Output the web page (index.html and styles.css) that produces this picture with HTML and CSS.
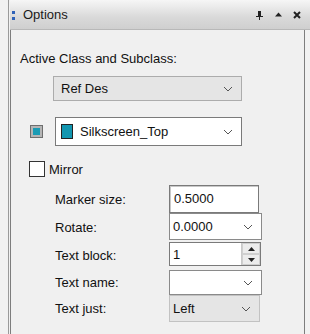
FILE: index.html
```html
<!DOCTYPE html>
<html>
    <head>
        <meta charset="utf-8">
        <link rel="stylesheet" href="styles.css">
    </head>
    <body>
        <div class="frame">
            <div class="panel">
                <div class="titlebar">
                    <span class="grip"><i></i><i></i></span>
                    <span class="title">Options</span>
                    <span class="tools">
                        <svg width="9" height="10" viewBox="0 0 9 10"><path d="M3 1h3v5H3z M1 6h7v1H1z M4 7h1v3H4z" fill="#222"/></svg>
                        <svg width="7" height="5" viewBox="0 0 7 5"><path d="M3.5 0.5L7 4.5H0z" fill="#222"/></svg>
                        <svg width="8" height="8" viewBox="0 0 8 8"><path d="M1 1l6 6M7 1L1 7" stroke="#222" stroke-width="2"/></svg>
                    </span>
                </div>
                <div class="content">
                    <div class="caption">Active Class and Subclass:</div>
                    <div class="combo gray wide">
                        <span>Ref Des</span>
                        <svg class="chev" width="10" height="6" viewBox="0 0 10 6"><path d="M1 1l4 4 4-4" fill="none" stroke="#555"/></svg>
                    </div>
                    <div class="color-row">
                        <span class="swatch-btn"><span></span></span>
                        <div class="combo white wide tall">
                            <span class="swatch"></span>
                            <span>Silkscreen_Top</span>
                            <svg class="chev" width="10" height="6" viewBox="0 0 10 6"><path d="M1 1l4 4 4-4" fill="none" stroke="#555"/></svg>
                        </div>
                    </div>
                    <label class="mirror"><span class="box"></span>Mirror</label>
                    <div class="fields">
                        <span class="lbl">Marker size:</span>
                        <div class="edit">0.5000</div>
                        <span class="lbl">Rotate:</span>
                        <div class="combo white small">
                            <span>0.0000</span>
                            <svg class="chev" width="10" height="6" viewBox="0 0 10 6"><path d="M1 1l4 4 4-4" fill="none" stroke="#555"/></svg>
                        </div>
                        <span class="lbl">Text block:</span>
                        <div class="spin">
                            <div class="spin-text">1</div>
                            <div class="spin-btns">
                                <span><svg width="7" height="4" viewBox="0 0 7 4"><path d="M3.5 0L7 4H0z" fill="#222"/></svg></span>
                                <span><svg width="7" height="4" viewBox="0 0 7 4"><path d="M0 0h7L3.5 4z" fill="#222"/></svg></span>
                            </div>
                        </div>
                        <span class="lbl">Text name:</span>
                        <div class="combo white small name">
                            <span></span>
                            <svg class="chev" width="10" height="6" viewBox="0 0 10 6"><path d="M1 1l4 4 4-4" fill="none" stroke="#555"/></svg>
                        </div>
                        <span class="lbl">Text just:</span>
                        <div class="combo gray small just">
                            <span>Left</span>
                            <svg class="chev" width="10" height="6" viewBox="0 0 10 6"><path d="M1 1l4 4 4-4" fill="none" stroke="#555"/></svg>
                        </div>
                    </div>
                </div>
            </div>
        </div>
    </body>
</html>
```
FILE: styles.css
```css
body {
    margin: 0;
    background-color: #f1f1f1;
    font-family: "Liberation Sans", Arial, sans-serif;
    font-size: 13px;
    color: #111;
}

.frame {
    height: 334px;
    padding-left: 8px;
    display: flex;
}

.panel {
    flex: 1;
    border-left: 1px solid #9a9a9a;
    padding-left: 1px;
    margin-right: 5px;
    display: flex;
    flex-direction: column;
}

    /*title bar*/

.titlebar {
    height: 29px;
    border-bottom: 1px solid #b8b8b8;
    background: linear-gradient(#f6f6f6, #d9d9d9 60%, #cfcfcf);
    display: flex;
    align-items: center;
    padding-left: 2px;
    margin-right: -5px;
}

.grip {
    display: flex;
    flex-direction: column;
    gap: 3px;
    margin-right: 8px;
    margin-top: 1px;
}

.grip i {
    width: 3px;
    height: 3px;
    background-color: #2f62b8;
}

.title {
    font-size: 13px;
    color: #1a1a1a;
}

.tools {
    margin-left: auto;
    display: flex;
    align-items: center;
    gap: 11px;
    padding-right: 9px;
}

    /*content box*/

.content {
    flex: 1;
    border-left: 1px solid #7d7d7d;
    border-right: 1px solid #7d7d7d;
    background-color: #f0f0f0;
    padding: 21px 0 0 9px;
}

.caption {
    height: 20px;
}

.combo {
    display: flex;
    align-items: center;
    box-sizing: border-box;
    border: 1px solid #acacac;
    padding-left: 7px;
    padding-right: 8px;
}

.combo .chev {
    margin-left: auto;
}

.combo.gray {
    background-color: #e5e5e5;
}

.combo.white {
    background-color: #fff;
}

.combo.wide {
    width: 189px;
    height: 25px;
    margin-left: 33px;
    margin-top: 5px;
}

.combo.tall {
    width: 187px;
    height: 29px;
    margin-left: 12px;
    margin-top: 0;
    border-color: #7a7a7a;
    padding-left: 5px;
}

.color-row {
    display: flex;
    align-items: center;
    margin-top: 16px;
    padding-left: 10px;
}

.swatch-btn {
    width: 13px;
    height: 13px;
    border: 1px solid #6e6e6e;
    background-color: #b5b5b5;
    padding: 2px;
    box-sizing: border-box;
}

.swatch-btn span {
    display: block;
    width: 100%;
    height: 100%;
    background-color: #1a9bb4;
}

.swatch {
    width: 10px;
    height: 13px;
    border: 1px solid #222;
    background-color: #1296b0;
    margin-right: 7px;
}

.mirror {
    display: flex;
    align-items: center;
    margin-top: 15px;
    margin-left: 9px;
}

.box {
    width: 14px;
    height: 14px;
    border: 1px solid #333;
    background-color: #fff;
    margin-right: 4px;
}

    /*field grid*/

.fields {
    display: grid;
    grid-template-columns: 114px auto;
    grid-template-rows: 28px 29px 27px 26px 27px;
    margin-top: 8px;
    padding-left: 35px;
    align-items: center;
}

.edit {
    align-self: start;
    width: 90px;
    height: 28px;
    box-sizing: border-box;
    background-color: #fff;
    border: 1px solid #7a7a7a;
    box-shadow: inset 1px 1px 0 #c8c8c8;
    padding: 5px 0 0 4px;
}

.fields .combo.small {
    align-self: start;
    width: 93px;
    height: 27px;
    padding-left: 3px;
    border-color: #8a8a8a;
}

.fields .combo.name {
    height: 25px;
    margin-top: 1px;
}

.fields .combo.just {
    width: 91px;
    border-color: #c2c2c2;
}

.spin {
    align-self: start;
    display: flex;
    width: 92px;
    height: 24px;
    box-sizing: border-box;
    border: 1px solid #7a7a7a;
    background-color: #fff;
}

.spin-text {
    flex: 1;
    padding: 4px 0 0 3px;
}

.spin-btns {
    width: 18px;
    display: flex;
    flex-direction: column;
    border-left: 1px solid #c9c9c9;
    background-color: #ececec;
}

.spin-btns span {
    flex: 1;
    display: flex;
    align-items: center;
    justify-content: center;
    border: 1px solid #cfcfcf;
}
```
